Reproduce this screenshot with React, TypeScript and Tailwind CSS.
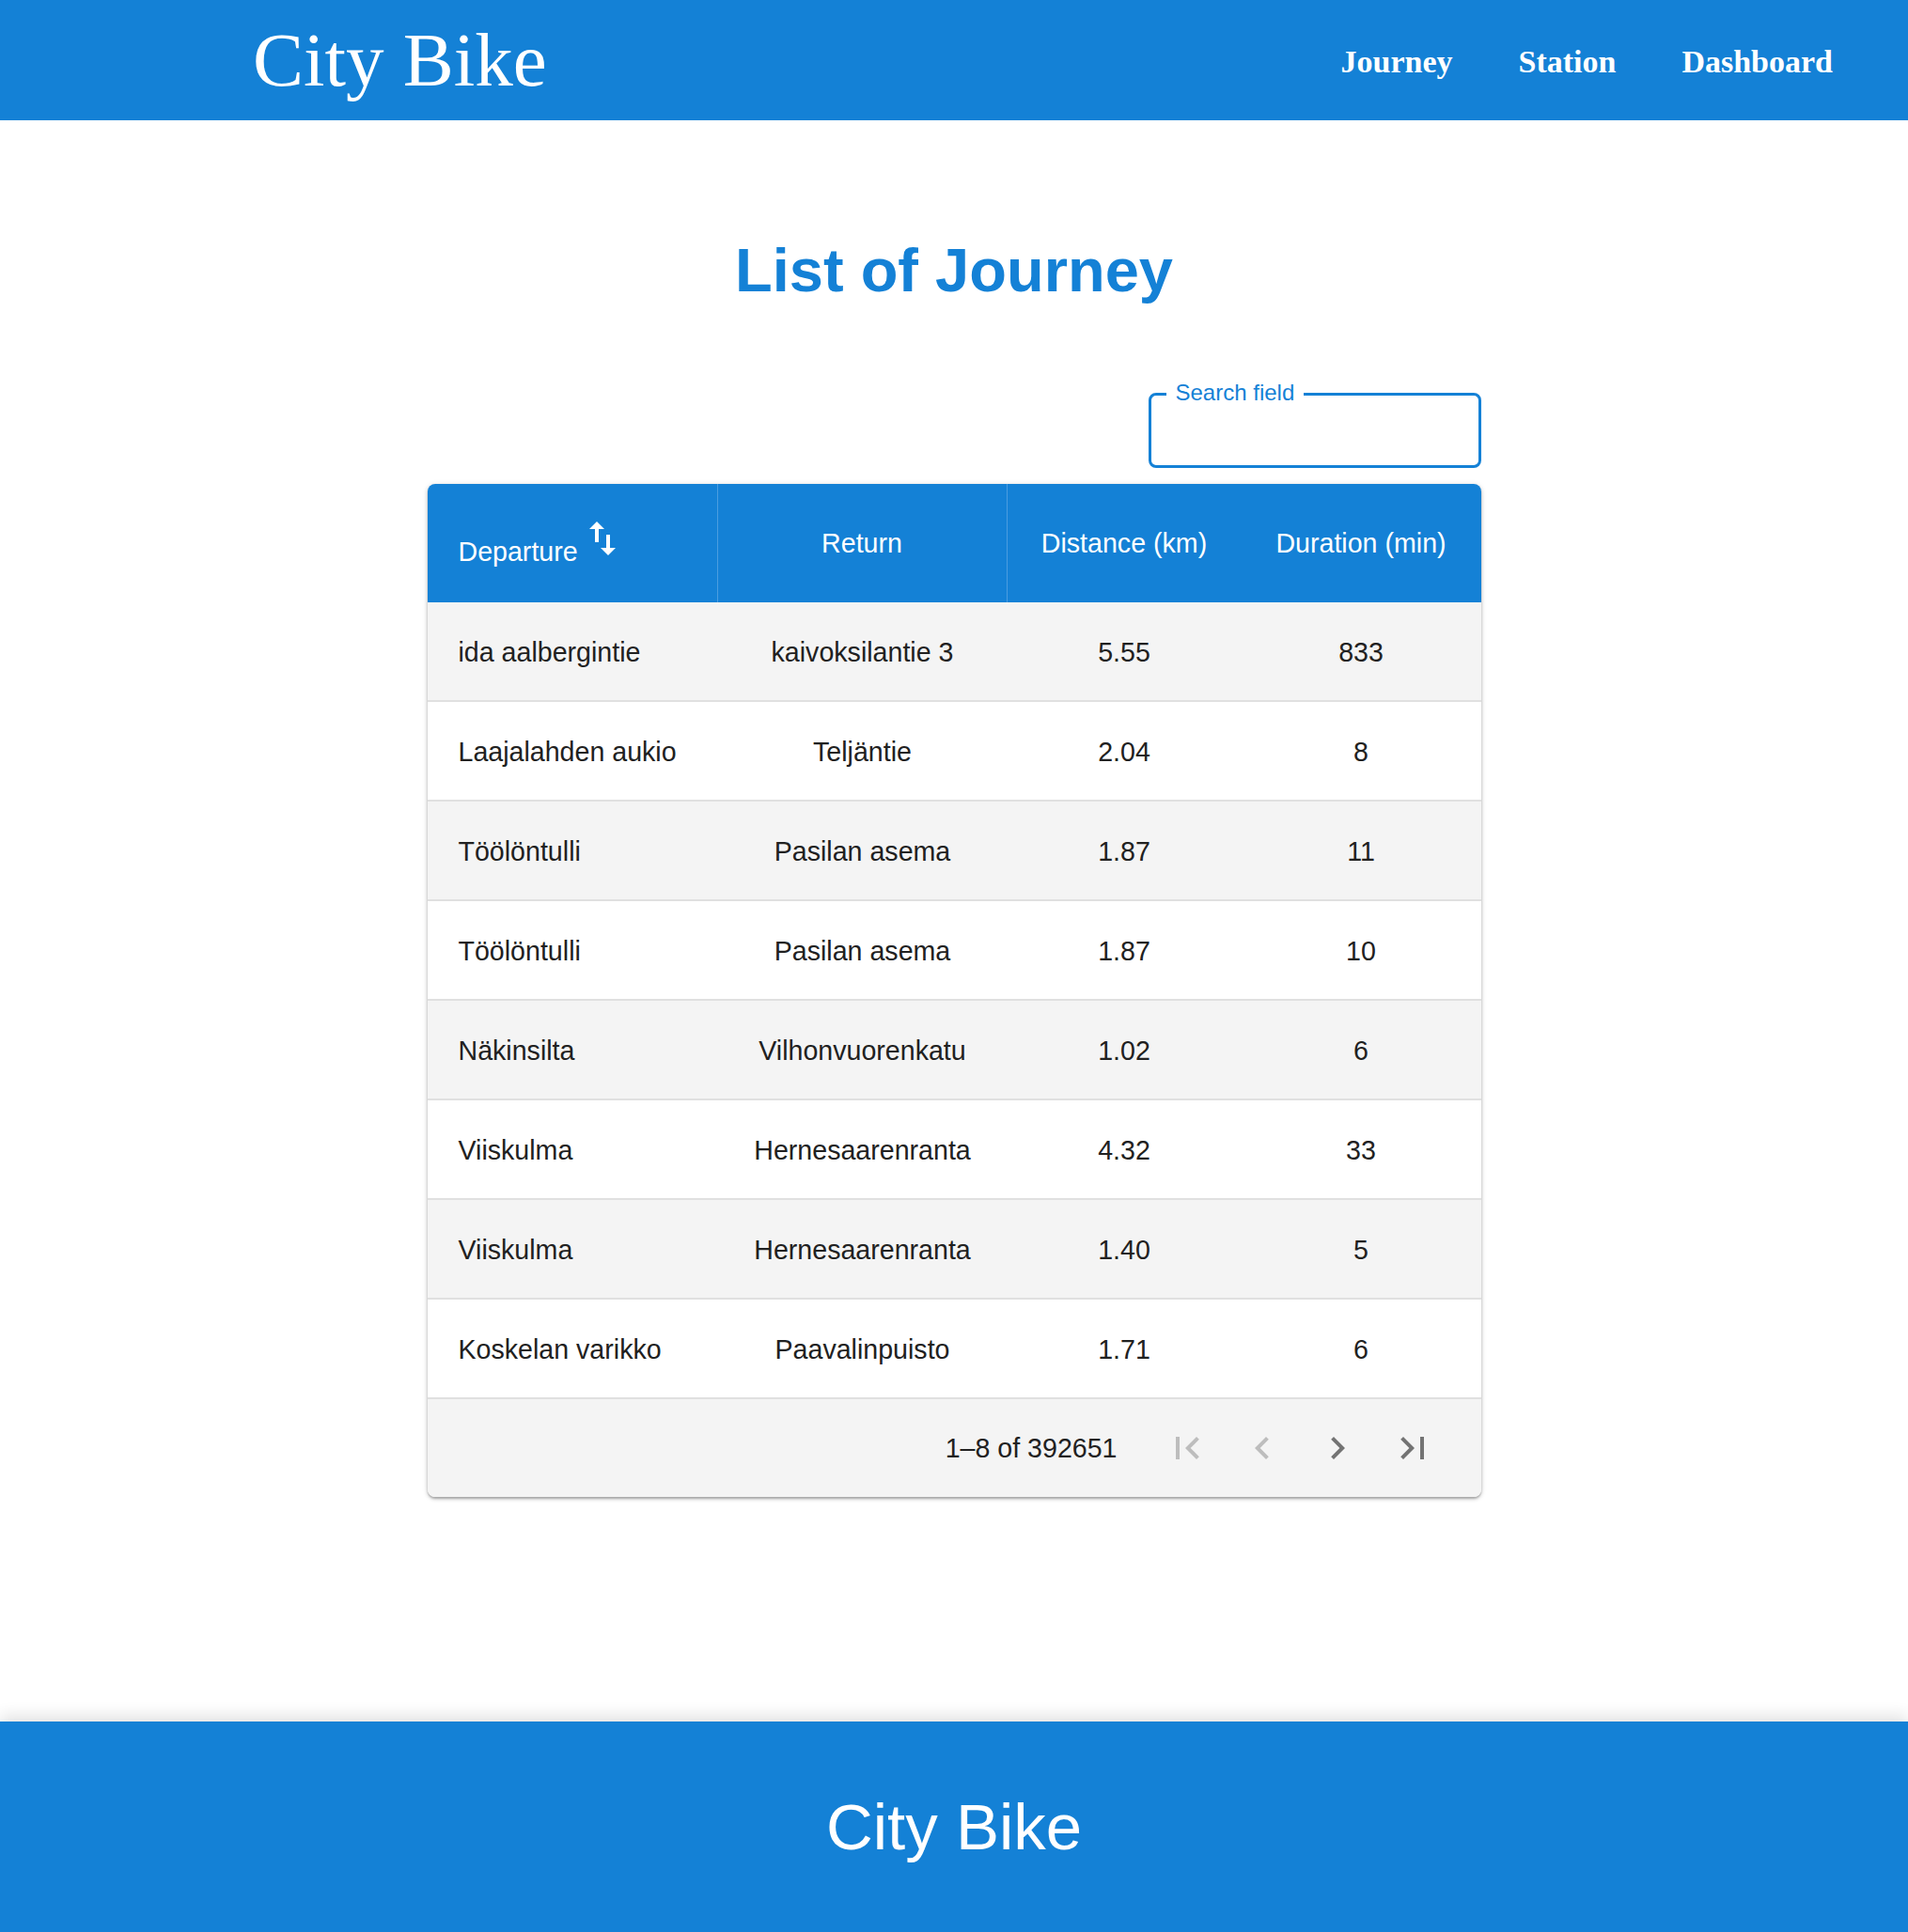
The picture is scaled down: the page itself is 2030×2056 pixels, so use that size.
import React from 'react';

type Journey = {
  departure: string;
  ret: string;
  distance: string;
  duration: string;
};

const journeys: Journey[] = [
  { departure: 'ida aalbergintie', ret: 'kaivoksilantie 3', distance: '5.55', duration: '833' },
  { departure: 'Laajalahden aukio', ret: 'Teljäntie', distance: '2.04', duration: '8' },
  { departure: 'Töölöntulli', ret: 'Pasilan asema', distance: '1.87', duration: '11' },
  { departure: 'Töölöntulli', ret: 'Pasilan asema', distance: '1.87', duration: '10' },
  { departure: 'Näkinsilta', ret: 'Vilhonvuorenkatu', distance: '1.02', duration: '6' },
  { departure: 'Viiskulma', ret: 'Hernesaarenranta', distance: '4.32', duration: '33' },
  { departure: 'Viiskulma', ret: 'Hernesaarenranta', distance: '1.40', duration: '5' },
  { departure: 'Koskelan varikko', ret: 'Paavalinpuisto', distance: '1.71', duration: '6' },
];

const cols = 'grid grid-cols-[309px_308px_249px_255px]';

function PagerIcon({ d, disabled }: { d: string; disabled?: boolean }) {
  return (
    <button className="w-[80px] h-[80px] flex items-center justify-center rounded-full">
      <svg viewBox="0 0 24 24" className={`w-[48px] h-[48px] ${disabled ? 'fill-[#bdbdbd]' : 'fill-[#737373]'}`}>
        <path d={d} />
      </svg>
    </button>
  );
}

export default function App() {
  return (
    <div className="min-h-screen flex flex-col bg-white font-['Liberation_Sans',Arial,sans-serif]">
      {/* Top bar */}
      <header className="h-[128px] bg-[#1481d6] flex items-center justify-between pl-[269px] pr-[80px] text-white font-['Liberation_Serif','Times_New_Roman',serif]">
        <div className="text-[81px] leading-none">City Bike</div>
        <nav className="flex items-center gap-[70px] text-[34px] font-bold pt-[2px]">
          <a>Journey</a>
          <a>Station</a>
          <a>Dashboard</a>
        </nav>
      </header>

      <main className="flex-1 flex flex-col items-center">
        <h1 className="mt-[122px] text-[65px] leading-[76px] font-bold text-[#1481d6]">List of Journey</h1>

        <div className="w-[1121px] mt-[92px] flex justify-end">
          {/* focused outlined search field */}
          <div className="relative w-[354px] h-[80px] rounded-[8px] border-[3px] border-[#1481d6]">
            <span className="absolute -top-[18px] left-[16px] px-[10px] bg-white text-[24px] leading-[30px] text-[#1481d6]">
              Search field
            </span>
          </div>
        </div>

        {/* Journey table */}
        <div className="w-[1121px] mt-[17px] rounded-[8px] overflow-hidden bg-white shadow-[0_2px_2px_rgba(0,0,0,0.2),0_2px_4px_rgba(0,0,0,0.14),0_1px_6px_rgba(0,0,0,0.12)] text-[28.6px] text-[#212121]">
          <div className={`${cols} h-[126px] bg-[#1481d6] text-white`}>
            <div className="flex items-center pl-[33px] border-r border-[#4a9de0]">
              <div className="leading-[40px]">
                Departure
                <svg viewBox="0 0 24 24" className="inline-block align-baseline w-[48px] h-[48px] ml-[2px] fill-white">
                  <path d="M16 17.01V10h-2v7.01h-3L15 21l4-3.99zM9 3 5 6.99h3V14h2V6.99h3z" />
                </svg>
              </div>
            </div>
            <div className="flex items-center justify-center leading-[40px] border-r border-[#4a9de0]">Return</div>
            <div className="flex items-center justify-center leading-[40px]">Distance (km)</div>
            <div className="flex items-center justify-center leading-[40px]">Duration (min)</div>
          </div>

          {journeys.map((j, i) => (
            <div
              key={i}
              className={`${cols} h-[106px] pt-[2px] border-b-2 border-[#e0e0e0] leading-[40px] ${i % 2 === 0 ? 'bg-[#f4f4f4]' : 'bg-white'}`}
            >
              <div className="flex items-center pl-[33px]">{j.departure}</div>
              <div className="flex items-center justify-center">{j.ret}</div>
              <div className="flex items-center justify-center">{j.distance}</div>
              <div className="flex items-center justify-center">{j.duration}</div>
            </div>
          ))}

          <div className="h-[104px] bg-[#f4f4f4] flex items-center justify-end pr-[33px]">
            <span className="mr-[34px]">1–8 of 392651</span>
            <PagerIcon disabled d="M18.41 16.59 13.82 12l4.59-4.59L17 6l-6 6 6 6zM6 6h2v12H6z" />
            <PagerIcon disabled d="M15.41 16.59 10.83 12l4.58-4.59L14 6l-6 6 6 6z" />
            <PagerIcon d="M8.59 16.59 13.17 12 8.59 7.41 10 6l6 6-6 6z" />
            <PagerIcon d="M5.59 7.41 10.18 12l-4.59 4.59L7 18l6-6-6-6zM16 6h2v12h-2z" />
          </div>
        </div>
      </main>

      <footer className="h-[224px] bg-[#1481d6] flex items-center justify-center text-white shadow-[0_-6px_16px_rgba(0,0,0,0.12)]">
        <span className="text-[69px] leading-none">City Bike</span>
      </footer>
    </div>
  );
}
